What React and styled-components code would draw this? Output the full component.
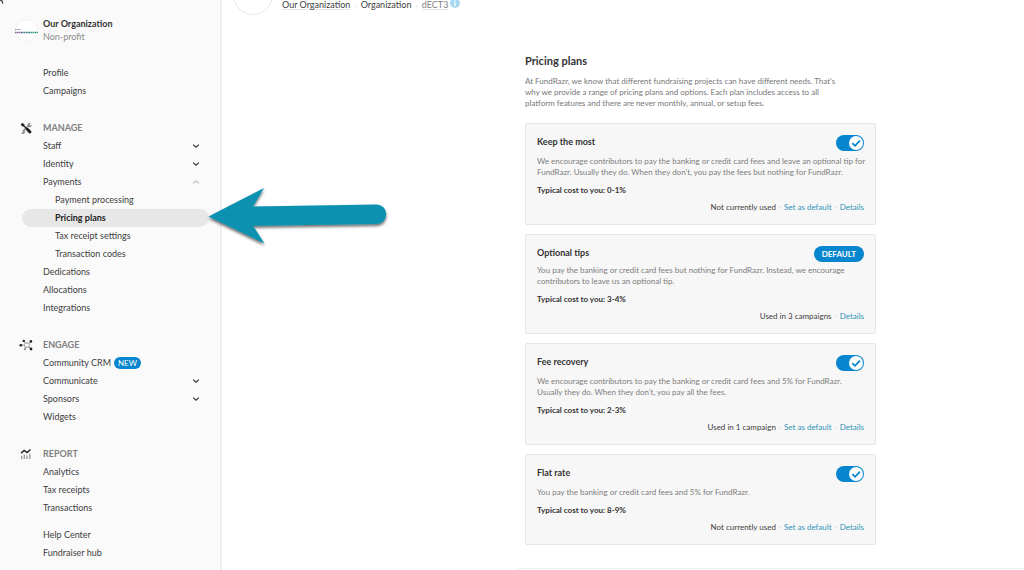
import React from "react";
import styled, { createGlobalStyle } from "styled-components";

const blue = "#0686ce";

const GlobalStyle = createGlobalStyle`
  *, *::before, *::after { box-sizing: border-box; }
  body {
    margin: 0;
    background: #fff;
    color: #404040;
    font-family: Lato, "Liberation Sans", sans-serif;
    font-size: 9px;
    line-height: 12px;
  }
  h1, h2, h3, p, ul { margin: 0; padding: 0; }
  ul { list-style: none; }
  a { color: inherit; text-decoration: none; }
  button { font: inherit; color: inherit; border: 0; background: none; padding: 0; cursor: pointer; }
`;

const Shell = styled.div`
  display: flex;
  height: 100vh;
  overflow: hidden;
`;

/* Sidebar */

const Sidebar = styled.aside`
  position: relative;
  flex: 0 0 222px;
  padding-top: 18px;
  background: #fafafa;
  border-right: 2px solid #efefef;
`;

const CornerMark = styled.svg`
  position: absolute;
  top: 0;
  left: 0;
`;

const OrgCard = styled.div`
  display: flex;
  align-items: center;
  gap: 5px;
  height: 24px;
  margin-bottom: 22px;
  padding-left: 15px;
`;

const OrgLogo = styled.svg`
  flex: none;
  width: 23px;
  height: 23px;
`;

const OrgName = styled.h2`
  color: #333;
  font-size: 9px;
  font-weight: 700;
  line-height: 12px;
`;

const OrgType = styled.p`
  color: #8b8b8b;
  line-height: 13px;
`;

const Nav = styled.nav`
  display: flex;
  flex-direction: column;
  gap: 9px;
`;

const NavSections = styled.div`
  display: flex;
  flex-direction: column;
  gap: 19px;
`;

const SectionTitle = styled.h3`
  display: flex;
  align-items: center;
  gap: 10px;
  height: 18px;
  padding-left: 19px;
  color: #808080;
  font-size: 9px;
  font-weight: 700;

  svg { flex: none; width: 14px; height: 14px; }
`;

const navItem = `
  display: flex;
  align-items: center;
  gap: 3px;
  height: 18px;
`;

const NavLink = styled.a`
  ${navItem}
  margin: 0 11px 0 22px;
  padding-left: ${(p) => (p.$sub ? 33 : 21)}px;
  border-radius: 9px;
  background: ${(p) => (p.$active ? "#e7e7e7" : "transparent")};
  color: ${(p) => (p.$active ? "#222" : "#404040")};
  font-weight: ${(p) => (p.$active ? 700 : 400)};
`;

const NavToggle = styled.button`
  ${navItem}
  justify-content: space-between;
  width: 100%;
  padding: 0 20px 0 43px;
  color: #404040;
`;

const Chevron = styled.svg`
  width: 8px;
  height: 8px;
  color: ${(p) => (p.$open ? "#c4c4c4" : "#444")};
`;

const NewBadge = styled.span`
  padding: 0 4px;
  border-radius: 6px;
  background: ${blue};
  color: #fff;
  font-size: 8px;
`;

/* Main column */

const Main = styled.main`
  flex: 1;
  min-width: 0;
`;

const PageHeader = styled.header`
  display: flex;
  align-items: flex-end;
  gap: 9px;
  height: 15px;
  padding-left: 11px;
  overflow: hidden;
`;

const HeaderAvatar = styled.div`
  flex: none;
  width: 40px;
  height: 40px;
  border: 1px solid #e8e8e8;
  border-radius: 50%;
`;

const Crumbs = styled.div`
  display: flex;
  align-items: center;
  gap: 4px;
  padding-bottom: 5px;
  line-height: 9px;
`;

const Crumb = styled.a`
  border-bottom: 1px solid ${(p) => (p.$line ? "#e4e4e4" : "transparent")};
  color: ${(p) => (p.$muted ? "#808080" : "#404040")};
`;

const Dot = styled.span`
  color: #d4d4d4;
`;

const InfoButton = styled.button`
  display: flex;
  width: 10px;
  height: 10px;
  margin-left: -2px;
  align-self: flex-start;

  svg { width: 10px; height: 10px; }
`;

const Content = styled.div`
  display: grid;
  grid-template-columns: 295px minmax(0, 1fr);
`;

const PlansSection = styled.section`
  grid-column: 2;
  padding: 38px 8px 23px;
  border-bottom: 1px solid #f0f0f0;
`;

const Title = styled.h1`
  color: #333;
  font-size: 11px;
  font-weight: 700;
  line-height: 16px;
`;

const Intro = styled.p`
  margin: 7px 0 14px;
  color: #777;
  font-size: 8px;
  line-height: 11px;
  white-space: pre-line;
`;

const PlanList = styled.ul`
  display: flex;
  flex-direction: column;
  gap: 9px;
  max-width: 351px;
`;

const PlanCard = styled.li`
  padding: 11px;
  border: 1px solid #e6e6e6;
  border-radius: 2px;
  background: #f7f7f7;
`;

const PlanHeader = styled.div`
  display: flex;
  justify-content: space-between;
  height: 16px;
  margin-bottom: ${(p) => (p.$tight ? 3 : 5)}px;
`;

const PlanName = styled.h2`
  color: #333;
  font-size: 9px;
  font-weight: 700;
  line-height: 14px;
`;

const PlanText = styled.p`
  color: #7d7d7d;
  font-size: 8px;
  line-height: 11px;
  white-space: pre;
`;

const PlanCost = styled.p`
  margin: 6px 0;
  color: #333;
  font-size: 8px;
  font-weight: 700;
`;

const PlanFooter = styled.div`
  display: flex;
  justify-content: flex-end;
  gap: 3px;
  font-size: 8px;
  line-height: 11px;
`;

const PlanLink = styled.a`
  color: #2f93b8;
`;

const DefaultBadge = styled.span`
  height: 16px;
  padding: 0 8px;
  border-radius: 8px;
  background: ${blue};
  color: #fff;
  font-size: 8px;
  font-weight: 700;
  line-height: 16px;
`;

const SwitchLabel = styled.label`
  display: flex;
  width: 28px;
  height: 16px;
  cursor: pointer;
`;

const SwitchInput = styled.input`
  appearance: none;
  display: flex;
  flex: none;
  width: 28px;
  height: 16px;
  margin: 0;
  border-radius: 8px;
  background: #bbb;
  cursor: pointer;

  &::before {
    content: "";
    width: 14px;
    height: 14px;
    margin: 1px;
    border-radius: 50%;
    background: #fff;
  }

  &:checked { background: ${blue}; }
  &:checked::before { margin-left: 13px; }
`;

const SwitchTick = styled.svg`
  flex: none;
  width: 14px;
  height: 14px;
  margin: 1px 0 0 -15px;
  pointer-events: none;
`;

const Pointer = styled.svg`
  position: absolute;
  top: 184px;
  left: 204px;
  width: 188px;
  height: 70px;
  z-index: 2;
  pointer-events: none;
`;

/* Icons */

const ToolsIcon = () => (
  <svg viewBox="0 0 14 14" aria-hidden="true">
    <path d="M4.200 9.900 9.400 4.700" stroke="#888" strokeWidth="1.600" />
    <path d="M8.500 5a2.300 2.300 0 0 1 3.200-2.900L10.400 3.500l.5.7.8.2 1-1A2.300 2.300 0 0 1 9.500 6z" fill="#888" />
    <path d="M5 9a2.100 2.100 0 1 1-2.900 2.800l1.500-.2.3-1.100z" fill="#888" />
    <path d="M2.500 2.700 5 5" stroke="#222" strokeWidth="2.600" fill="none" />
    <path d="M5 5 8 8" stroke="#222" strokeWidth="1.400" fill="none" />
    <path d="M8.300 8.300 10.900 10.900" stroke="#222" strokeWidth="3" strokeLinecap="round" />
  </svg>
);

const NetworkIcon = () => (
  <svg viewBox="0 0 14 14" aria-hidden="true">
    <path d="M2 7h3M5 3l1.500 2M12 3.500 10 5.500M12 11l-2-2M6 11l.700-2" stroke="#777" strokeWidth=".8" />
    <rect x="5.500" y="5" width="4.800" height="4.200" rx="1.300" fill="none" stroke="#999" strokeWidth="1" />
    <circle cx="1.800" cy="7.300" r="1.300" fill="#222" />
    <circle cx="4.800" cy="2.900" r="1.200" fill="#222" />
    <circle cx="11.900" cy="3.400" r="1.300" fill="#222" />
    <circle cx="12" cy="11" r="1.400" fill="#222" />
    <circle cx="5.900" cy="11.200" r=".9" fill="#777" />
  </svg>
);

const ReportIcon = () => (
  <svg viewBox="0 0 14 14" aria-hidden="true">
    <path d="M2.700 12V8.800M5.300 12V7.500M8 12V8.500M10.800 12V6.800" stroke="#999" strokeWidth="1.300" />
    <path d="M2 6.200 5.200 3.500 8 5.500 11.500 2.500" stroke="#222" strokeWidth="1.400" fill="none" />
  </svg>
);

const ChevronIcon = ({ open }) => (
  <Chevron $open={open} viewBox="0 0 8 8" aria-hidden="true">
    <path
      d={open ? "M1.500 5 4 2.700 6.500 5" : "M1.500 3 4 5.300 6.500 3"}
      fill="none"
      stroke="currentColor"
      strokeWidth="1.200"
      strokeLinecap="round"
    />
  </Chevron>
);

/* Data */

const sections = [
  { id: "org", items: [{ label: "Profile" }, { label: "Campaigns" }] },
  {
    id: "manage",
    title: "MANAGE",
    icon: <ToolsIcon />,
    items: [
      { label: "Staff", menu: true },
      { label: "Identity", menu: true },
      { label: "Payments", menu: true, open: true },
      { label: "Payment processing", sub: true },
      { label: "Pricing plans", sub: true, active: true },
      { label: "Tax receipt settings", sub: true },
      { label: "Transaction codes", sub: true },
      { label: "Dedications" },
      { label: "Allocations" },
      { label: "Integrations" },
    ],
  },
  {
    id: "engage",
    title: "ENGAGE",
    icon: <NetworkIcon />,
    items: [
      { label: "Community CRM", isNew: true },
      { label: "Communicate", menu: true },
      { label: "Sponsors", menu: true },
      { label: "Widgets" },
    ],
  },
  {
    id: "report",
    title: "REPORT",
    icon: <ReportIcon />,
    items: [{ label: "Analytics" }, { label: "Tax receipts" }, { label: "Transactions" }],
  },
];

const helpLinks = [{ label: "Help Center" }, { label: "Fundraiser hub" }];

const plans = [
  {
    name: "Keep the most",
    text: "We encourage contributors to pay the banking or credit card fees and leave an optional tip for\nFundRazr. Usually they do. When they don't, you pay the fees but nothing for FundRazr.",
    cost: "0-1%",
    usage: "Not currently used",
  },
  {
    name: "Optional tips",
    text: "You pay the banking or credit card fees but nothing for FundRazr. Instead, we encourage\ncontributors to leave us an optional tip.",
    cost: "3-4%",
    usage: "Used in 3 campaigns",
    isDefault: true,
  },
  {
    name: "Fee recovery",
    text: "We encourage contributors to pay the banking or credit card fees and 5% for FundRazr.\nUsually they do. When they don't, you pay all the fees.",
    cost: "2-3%",
    usage: "Used in 1 campaign",
  },
  {
    name: "Flat rate",
    text: "You pay the banking or credit card fees and 5% for FundRazr.",
    cost: "8-9%",
    usage: "Not currently used",
  },
];

const NavItem = ({ item }) => (
  <li>
    {item.menu ? (
      <NavToggle type="button" aria-expanded={!!item.open}>
        {item.label}
        <ChevronIcon open={item.open} />
      </NavToggle>
    ) : (
      <NavLink href="#" $sub={item.sub} $active={item.active} aria-current={item.active ? "page" : undefined}>
        {item.label}
        {item.isNew && <NewBadge>NEW</NewBadge>}
      </NavLink>
    )}
  </li>
);

const Plan = ({ plan }) => (
  <PlanCard>
    <PlanHeader $tight={plan.isDefault}>
      <PlanName>{plan.name}</PlanName>
      {plan.isDefault ? (
        <DefaultBadge>DEFAULT</DefaultBadge>
      ) : (
        <SwitchLabel>
          <SwitchInput type="checkbox" role="switch" defaultChecked aria-label={plan.name} />
          <SwitchTick viewBox="0 0 14 14" aria-hidden="true">
            <path d="M3.300 7.200 6 9.800 10.900 4.600" fill="none" stroke={blue} strokeWidth="1.800" />
          </SwitchTick>
        </SwitchLabel>
      )}
    </PlanHeader>
    <PlanText>{plan.text}</PlanText>
    <PlanCost>Typical cost to you: {plan.cost}</PlanCost>
    <PlanFooter>
      <span>{plan.usage}</span>
      {!plan.isDefault && (
        <>
          <Dot>·</Dot>
          <PlanLink href="#">Set as default</PlanLink>
        </>
      )}
      <Dot>·</Dot>
      <PlanLink href="#">Details</PlanLink>
    </PlanFooter>
  </PlanCard>
);

export default function App() {
  return (
    <>
      <GlobalStyle />
      <Shell>
        <Sidebar>
          <CornerMark width="4" height="4" viewBox="0 0 4 4" aria-hidden="true">
            <path d="M0 .5 1.500 0 3 3.500" fill="none" stroke="#333" strokeWidth="1.200" />
          </CornerMark>
          <OrgCard>
            <OrgLogo viewBox="0 0 23 23" aria-hidden="true">
              <circle cx="11.500" cy="11.500" r="11" fill="#fff" stroke="#f1f1f1" />
              <path d="M0 10.500h6" stroke="#a58aae" strokeWidth="1.200" strokeDasharray="1.500 .5" />
              <path d="M0 13.500h7" stroke="#8a5f9c" strokeWidth="1.600" strokeDasharray="1.500 .4" />
              <path d="M7 13.500h7" stroke="#4b8192" strokeWidth="1.600" strokeDasharray="1.500 .4" />
              <path d="M14 13.500h9" stroke="#3f9a82" strokeWidth="1.600" strokeDasharray="1.500 .4" />
            </OrgLogo>
            <div>
              <OrgName>Our Organization</OrgName>
              <OrgType>Non-profit</OrgType>
            </div>
          </OrgCard>
          <Nav>
            <NavSections>
              {sections.map((section) => (
                <div key={section.id}>
                  {section.title && (
                    <SectionTitle>
                      {section.icon}
                      {section.title}
                    </SectionTitle>
                  )}
                  <ul>
                    {section.items.map((item) => (
                      <NavItem key={item.label} item={item} />
                    ))}
                  </ul>
                </div>
              ))}
            </NavSections>
            <ul>
              {helpLinks.map((item) => (
                <NavItem key={item.label} item={item} />
              ))}
            </ul>
          </Nav>
          <Pointer viewBox="204 184 188 70" aria-hidden="true">
            <defs>
              <filter id="pointer-shadow" x="-10%" y="-20%" width="120%" height="150%">
                <feDropShadow dx="0" dy="2" stdDeviation="1.500" floodColor="#000" floodOpacity=".6" />
              </filter>
            </defs>
            <path
              d="M208.500 216.500 264 188 253 206.500 376.500 204.500a9.800 9.800 0 0 1 0 19.600L253 225.800 264.500 243.500Z"
              fill="#0991b1"
              filter="url(#pointer-shadow)"
            />
          </Pointer>
        </Sidebar>
        <Main>
          <PageHeader>
            <HeaderAvatar />
            <Crumbs>
              <Crumb href="#" $line>Our Organization</Crumb>
              <Dot>·</Dot>
              <Crumb href="#">Organization</Crumb>
              <Dot>·</Dot>
              <Crumb href="#" $muted $line>dECT3</Crumb>
              <InfoButton type="button" aria-label="About this code">
                <svg viewBox="0 0 10 10" aria-hidden="true">
                  <circle cx="5" cy="3" r="5" fill="#a9d8f2" />
                  <path d="M5 2.500V6M5 .3v1.200" stroke="#fff" strokeWidth="1.300" />
                </svg>
              </InfoButton>
            </Crumbs>
          </PageHeader>
          <Content>
            <PlansSection>
              <Title>Pricing plans</Title>
              <Intro>
                {"At FundRazr, we know that different fundraising projects can have different needs. That's\nwhy we provide a range of pricing plans and options. Each plan includes access to all\nplatform features and there are never monthly, annual, or setup fees."}
              </Intro>
              <PlanList>
                {plans.map((plan) => (
                  <Plan key={plan.name} plan={plan} />
                ))}
              </PlanList>
            </PlansSection>
          </Content>
        </Main>
      </Shell>
    </>
  );
}
